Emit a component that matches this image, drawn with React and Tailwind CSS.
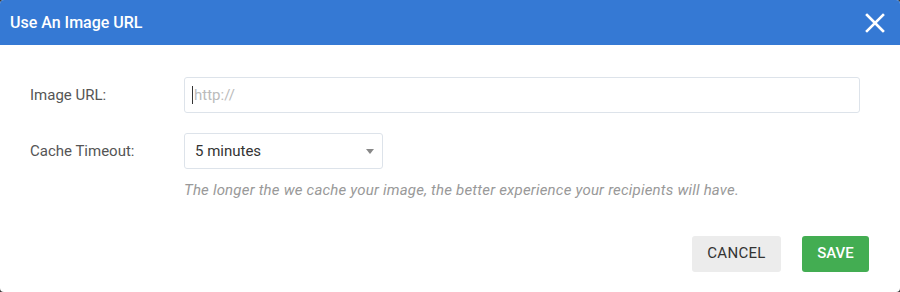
export default function App() {
  return (
    <div className="w-[900px] h-[292px] bg-[#3a3a3a] font-['Roboto',sans-serif]">
      <div className="w-full h-full bg-white rounded-[4px] overflow-hidden flex flex-col">
        <div className="h-[45px] bg-[#3579d4] flex items-center justify-between pl-[10px] pr-[15px]">
          <h1 className="text-white text-[16px] font-medium">Use An Image URL</h1>
          <svg width="20" height="20" viewBox="0 0 20 20" className="text-white">
            <path d="M2 2 L18 18 M18 2 L2 18" stroke="currentColor" strokeWidth="2.6" strokeLinecap="square" />
          </svg>
        </div>
        <div className="flex flex-col pt-[32px] pl-[30px] pr-[40px]">
          <div className="flex items-center h-[36px]">
            <label className="w-[154px] text-[15px] text-[#555]">Image URL:</label>
            <div className="flex-1 h-[36px] border border-[#dde3ea] rounded-[3px] flex items-center pl-[7px] text-[15px] text-[#bbb]">
              <span className="w-px h-[18px] bg-[#333] mr-[1px]"></span>http://
            </div>
          </div>
          <div className="flex items-center h-[36px] mt-[20px]">
            <label className="w-[154px] text-[15px] text-[#555]">Cache Timeout:</label>
            <div className="w-[199px] h-[36px] border border-[#dde3ea] rounded-[3px] flex items-center justify-between pl-[10px] pr-[8px] text-[15px] text-[#333]">
              <span>5 minutes</span>
              <svg width="8" height="5" viewBox="0 0 8 5"><path d="M0 0 L8 0 L4 5 Z" fill="#888" /></svg>
            </div>
          </div>
          <p className="ml-[154px] mt-[10px] text-[15px] italic tracking-[0.2px] text-[#999]">
            The longer the we cache your image, the better experience your recipients will have.
          </p>
          <div className="flex justify-end gap-[21px] mt-[34px] mr-[-9px]">
            <button className="w-[89px] h-[36px] rounded-[3px] bg-[#ececec] text-[#333] text-[15px] tracking-[0.3px]">CANCEL</button>
            <button className="w-[67px] h-[36px] rounded-[3px] bg-[#43ad52] text-white text-[15px] font-medium">SAVE</button>
          </div>
        </div>
      </div>
    </div>
  )
}
